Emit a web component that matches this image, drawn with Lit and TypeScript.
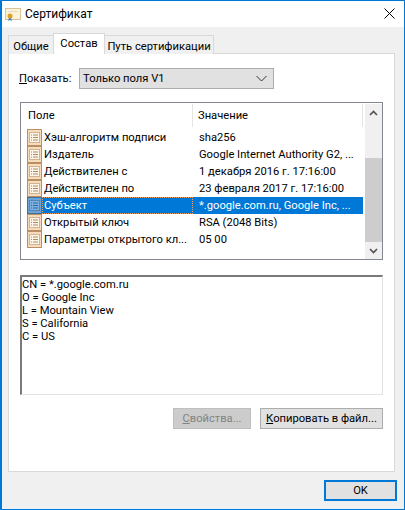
import { LitElement, html, css, svg } from "lit";
import { customElement } from "lit/decorators.js";

const rows = [
  ["Хэш-алгоритм подписи", "sha256"],
  ["Издатель", "Google Internet Authority G2, ..."],
  ["Действителен с", "1 декабря 2016 г. 17:16:00"],
  ["Действителен по", "23 февраля 2017 г. 17:16:00"],
  ["Субъект", "*.google.com.ru, Google Inc, ..."],
  ["Открытый ключ", "RSA (2048 Bits)"],
  ["Параметры открытого кл...", "05 00"],
];

const fieldIcon = (sel: boolean) => {
  const edge = sel ? "#3f6f9f" : "#b98f63";
  const fill = sel ? "#6ea3d6" : "#f6dcbd";
  const page = sel ? "#7fb0de" : "#fff6ea";
  const line = sel ? "#2f6aa6" : "#a98a68";
  return html`<svg class="ficon" width="15" height="17" viewBox="0 0 15 17">
    <rect x="0.5" y="0.5" width="14" height="16" fill=${fill} stroke=${edge} />
    <rect x="2.5" y="3.5" width="10" height="10" fill=${page} stroke=${edge} stroke-opacity="0.6" />
    ${svg`<path d="M4 6h1M6 6h5M4 8.500h1M6 8.500h5M4 11h1M6 11h5" stroke=${line} fill="none" />`}
  </svg>`;
};

@customElement("app-root")
export class AppRoot extends LitElement {
  static styles = css`
    :host {
      display: block;
      width: 405px;
      height: 510px;
      box-sizing: border-box;
      border: 1px solid #0078d7;
      border-left-width: 2px;
      background: #f0f0f0;
      font-family: Roboto, "Liberation Sans", Arial, sans-serif;
      font-size: 11.200px;
      color: #000;
      overflow: hidden;
    }
    .window { display: flex; flex-direction: column; height: 100%; }
    .title {
      height: 26px;
      background: #fff;
      display: flex;
      align-items: center;
      padding: 0 9px 0 3px;
      gap: 4px;
      flex: none;
    }
    .title .name { font-size: 12px; flex: 1; margin-top: -1px; }
    .title .close { margin-top: -1px; }
    .body { flex: 1; display: flex; flex-direction: column; padding: 6px 7px 0 6px; }
    .tabs { display: flex; align-items: flex-end; height: 21px; padding-left: 1px; position: relative; z-index: 1; margin-bottom: -1px; }
    .tab {
      height: 19px;
      box-sizing: border-box;
      border: 1px solid #d9d9d9;
      border-bottom: none;
      background: #f0f0f0;
      padding-top: 3px;
      line-height: 15px;
      margin-left: -1px;
      text-align: center;
      white-space: nowrap;
    }
    .tab.t1 { width: 46px; }
    .tab.t2 { width: 52px; height: 21px; background: #fff; padding-top: 2px; position: relative; z-index: 2; }
    .tab.t3 { width: 110px; }
    .panel {
      width: 387px;
      height: 419px;
      box-sizing: border-box;
      border: 1px solid #d9d9d9;
      background: #fff;
      padding: 14px 11px 0 11px;
      display: flex;
      flex-direction: column;
    }
    .show { display: flex; align-items: center; height: 21px; }
    .show label { width: 60px; margin-left: -1px; }
    .select {
      width: 195px;
      height: 21px;
      box-sizing: border-box;
      border: 1px solid #adadad;
      background: #e1e1e1;
      display: flex;
      align-items: center;
      justify-content: space-between;
      padding: 0 3px 0 3px;
    }
    .list {
      margin-top: 13px;
      height: 158px;
      box-sizing: border-box;
      border: 1px solid #828790;
      display: flex;
      background: #fff;
    }
    .listmain { flex: 1; min-width: 0; }
    .head { display: grid; grid-template-columns: 172px 170px; height: 26px; align-items: stretch; }
    .head div { padding-left: 7px; display: flex; align-items: center; border-right: 1px solid #e5e5e5; margin-top: 1px; margin-bottom: 2px; }
    .head div + div { padding-left: 5px; }
    .rows { display: flex; flex-direction: column; }
    .row { display: grid; grid-template-columns: 172px 170px; height: 17px; line-height: 17px; white-space: nowrap; }
    .c1 { display: flex; align-items: center; padding-left: 6px; gap: 2px; overflow: hidden; }
    .c2 { padding-left: 6px; overflow: hidden; }
    .row.sel .lbl, .row.sel .c2 { background: #0078d7; color: #fff; }
    .row.sel .lbl { flex: 1; outline: 1px dotted #f0a060; outline-offset: -1px; padding-left: 2px; margin-left: -2px; }
    .lbl { line-height: 17px; }
    .ficon { flex: none; display: block; }
    .sb { width: 17px; flex: none; background: #f0f0f0; display: flex; flex-direction: column; margin: 1px 0 0 0; }
    .sbbtn { height: 17px; display: flex; align-items: center; justify-content: center; flex: none; }
    .sbtrack { flex: 1; display: flex; flex-direction: column; }
    .sbspace { height: 37px; flex: none; }
    .sbthumb { flex: 1; background: #cdcdcd; }
    .details {
      margin-top: 15px;
      height: 120px;
      box-sizing: border-box;
      border-top: 2px solid #7a7a7a;
      border-left: 2px solid #7a7a7a;
      border-right: 1px solid #e3e3e3;
      border-bottom: 1px solid #e3e3e3;
      padding: 1px 0 0 0;
      line-height: 13px;
      background: #fff;
    }
    .details div { height: 13px; }
    .actions { display: flex; justify-content: flex-end; gap: 9px; margin-top: 13px; }
    .btn {
      height: 21px;
      box-sizing: border-box;
      border: 1px solid #adadad;
      background: #e1e1e1;
      display: flex;
      align-items: center;
      justify-content: center;
    }
    .btn.dis { width: 78px; background: #cccccc; border-color: #bfbfbf; color: #838383; }
    .btn.copy { width: 123px; }
    .footer { display: flex; justify-content: flex-end; padding: 8px 0 0 0; }
    .ok {
      width: 73px;
      height: 21px;
      box-sizing: border-box;
      border: 2px solid #0078d7;
      background: #e1e1e1;
      display: flex;
      align-items: center;
      justify-content: center;
    }
    u { text-underline-offset: 1px; }
  `;

  render() {
    return html`<div class="window">
      <div class="title">
        <svg width="16" height="16" viewBox="0 0 16 16">
          <rect x="0.5" y="2.5" width="15" height="11" fill="#fdf3dd" stroke="#d9c39a" />
          <rect x="3" y="5" width="10" height="1" fill="#ead9b8" />
          <path d="M4 12l-1 3 2-1 2 1-1-3z" fill="#2f7fd6" />
          <circle cx="5" cy="10" r="2.500" fill="#e0a020" />
        </svg>
        <span class="name">Сертификат</span>
        <svg class="close" width="11" height="11" viewBox="0 0 11 11"><path d="M0.500 0.500l10 10M10.500 0.500l-10 10" stroke="#000" fill="none" /></svg>
      </div>
      <div class="body">
        <div class="tabs">
          <div class="tab t1">Общие</div>
          <div class="tab t2">Состав</div>
          <div class="tab t3">Путь сертификации</div>
        </div>
        <div class="panel">
          <div class="show">
            <label><u>П</u>оказать:</label>
            <div class="select">
              <span>Только поля V1</span>
              <svg width="11" height="7" viewBox="0 0 11 7" style="margin-right:3px"><path d="M0.500 1l5 5 5-5" stroke="#333" fill="none" /></svg>
            </div>
          </div>
          <div class="list">
            <div class="listmain">
              <div class="head"><div>Поле</div><div>Значение</div></div>
              <div class="rows">
                ${rows.map(
                  ([a, b]) => html`<div class="row ${a === "Субъект" ? "sel" : ""}">
                    <div class="c1">${fieldIcon(a === "Субъект")}<span class="lbl">${a}</span></div>
                    <div class="c2">${b}</div>
                  </div>`
                )}
              </div>
            </div>
            <div class="sb">
              <div class="sbbtn"><svg width="9" height="6" viewBox="0 0 9 6"><path d="M1 5l3.500-3.500L8 5" stroke="#505050" stroke-width="1.600" fill="none" /></svg></div>
              <div class="sbtrack"><div class="sbspace"></div><div class="sbthumb"></div></div>
              <div class="sbbtn"><svg width="9" height="6" viewBox="0 0 9 6"><path d="M1 1l3.500 3.500L8 1" stroke="#505050" stroke-width="1.600" fill="none" /></svg></div>
            </div>
          </div>
          <div class="details">
            <div>CN = *.google.com.ru</div>
            <div>O = Google Inc</div>
            <div>L = Mountain View</div>
            <div>S = California</div>
            <div>C = US</div>
          </div>
          <div class="actions">
            <div class="btn dis"><span><u>С</u>войства...</span></div>
            <div class="btn copy"><span><u>К</u>опировать в файл...</span></div>
          </div>
        </div>
        <div class="footer"><div class="ok">OK</div></div>
      </div>
    </div>`;
  }
}
